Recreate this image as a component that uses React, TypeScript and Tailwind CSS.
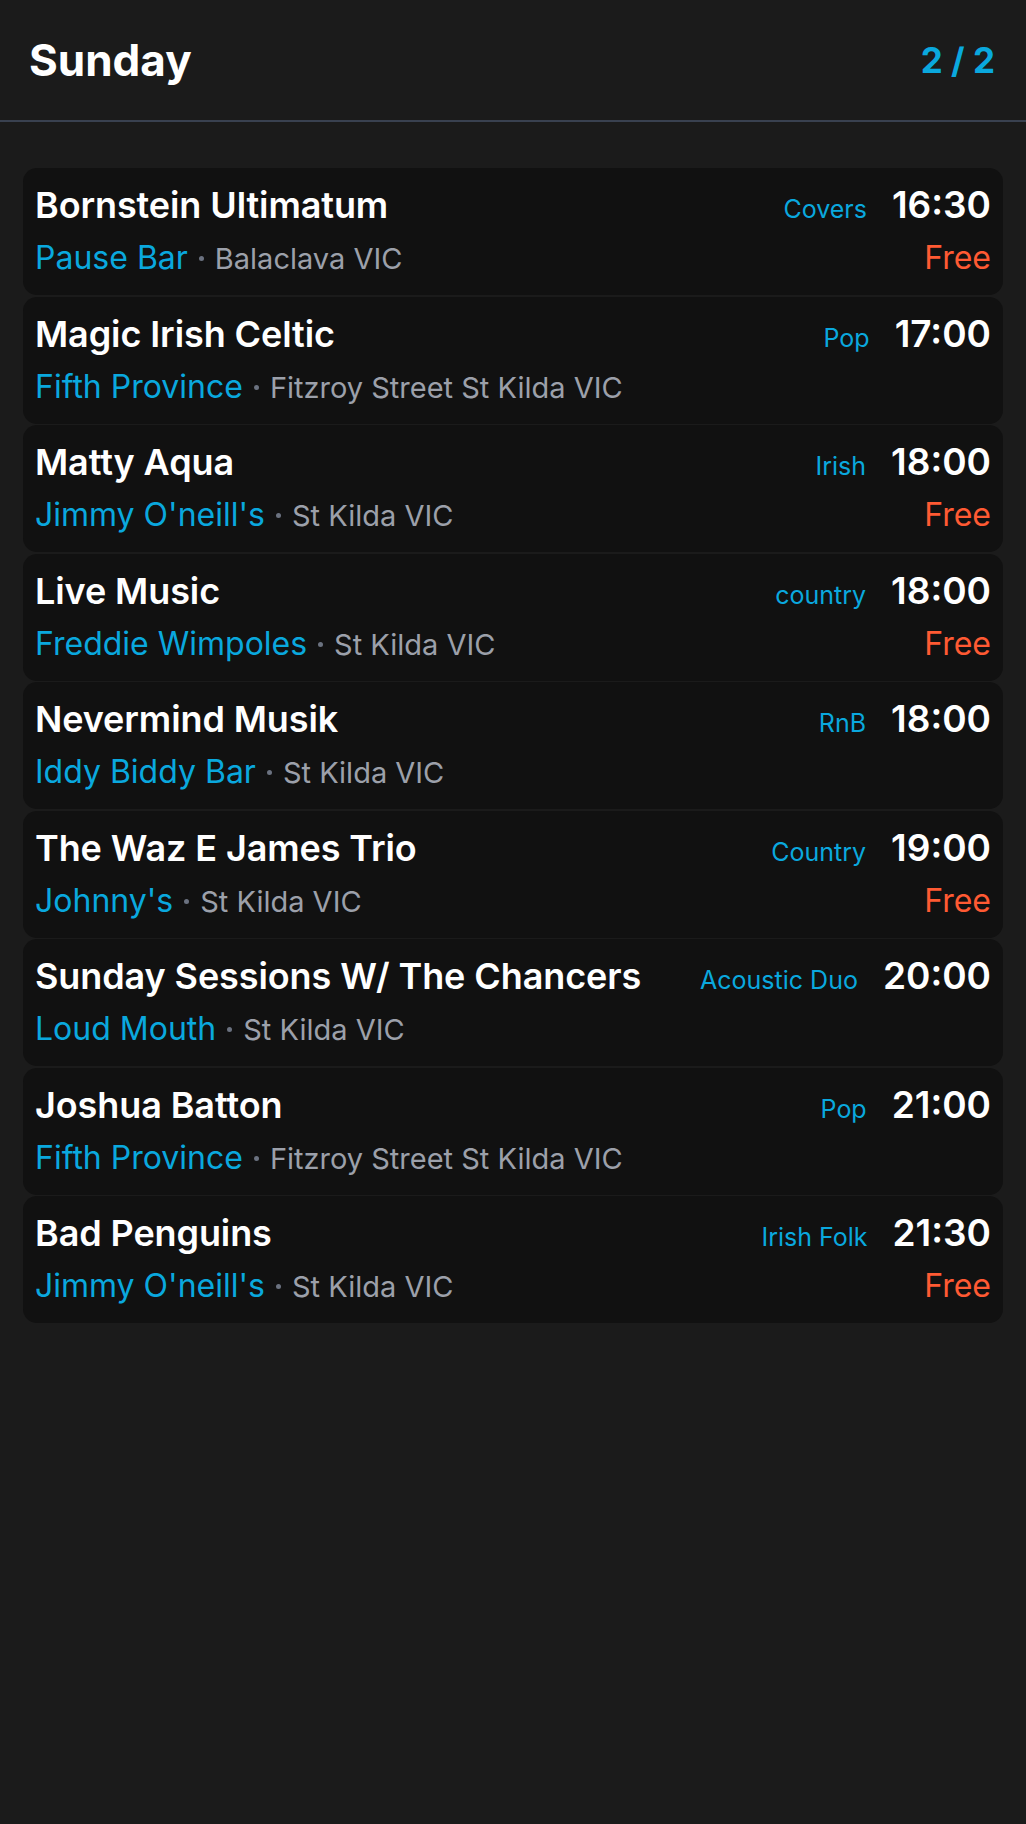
const GIGS = [
  { title: "Bornstein Ultimatum", venue: "Pause Bar", place: "Balaclava VIC", genre: "Covers", time: "16:30", free: true },
  { title: "Magic Irish Celtic", venue: "Fifth Province", place: "Fitzroy Street St Kilda VIC", genre: "Pop", time: "17:00", free: false },
  { title: "Matty Aqua", venue: "Jimmy O'neill's", place: "St Kilda VIC", genre: "Irish", time: "18:00", free: true },
  { title: "Live Music", venue: "Freddie Wimpoles", place: "St Kilda VIC", genre: "country", time: "18:00", free: true },
  { title: "Nevermind Musik", venue: "Iddy Biddy Bar", place: "St Kilda VIC", genre: "RnB", time: "18:00", free: false },
  { title: "The Waz E James Trio", venue: "Johnny's", place: "St Kilda VIC", genre: "Country", time: "19:00", free: true },
  { title: "Sunday Sessions W/ The Chancers", venue: "Loud Mouth", place: "St Kilda VIC", genre: "Acoustic Duo", time: "20:00", free: false },
  { title: "Joshua Batton", venue: "Fifth Province", place: "Fitzroy Street St Kilda VIC", genre: "Pop", time: "21:00", free: false },
  { title: "Bad Penguins", venue: "Jimmy O'neill's", place: "St Kilda VIC", genre: "Irish Folk", time: "21:30", free: true },
];

type Gig = (typeof GIGS)[number];

function GigCard({ gig }: { gig: Gig }) {
  return (
    <div className="rounded-[14px] bg-[#111111] px-[12px] pt-[17px] pb-[19px]">
      <div className="flex h-[40px] items-baseline justify-between leading-[40px]">
        <span className="text-[36px] font-semibold text-white tracking-[-0.1px]">
          {gig.title}
        </span>
        <div className="flex items-baseline gap-[25px]">
          <span className="text-[25px] text-[#0aa8de]">{gig.genre}</span>
          <span className="text-[37px] font-semibold text-white">{gig.time}</span>
        </div>
      </div>
      <div className="mt-[15px] flex h-[36px] items-baseline justify-between leading-[36px]">
        <div className="flex items-baseline">
          <span className="text-[32px] text-[#0aa8de]">{gig.venue}</span>
          <span className="relative -top-[8px] mx-[11px] inline-block h-[5px] w-[5px] rounded-full bg-[#6b7280]" />
          <span className="text-[29px] text-[#9ca0aa]">{gig.place}</span>
        </div>
        {gig.free && <span className="text-[32px] text-[#ff5a33]">Free</span>}
      </div>
    </div>
  );
}

export default function App() {
  return (
    <div className="min-h-[1824px] bg-[#1b1b1b] font-['Inter',sans-serif]">
      <header className="flex h-[122px] items-center justify-between border-b-2 border-[#394150] pl-[29px] pr-[31px]">
        <h1 className="text-[44px] font-bold text-white">Sunday</h1>
        <span className="text-[35px] font-bold text-[#0aa8de]">2 / 2</span>
      </header>
      <div className="flex flex-col gap-[1.5px] px-[23px] pt-[46px]">
        {GIGS.map((g, i) => (
          <GigCard key={i} gig={g} />
        ))}
      </div>
    </div>
  );
}
